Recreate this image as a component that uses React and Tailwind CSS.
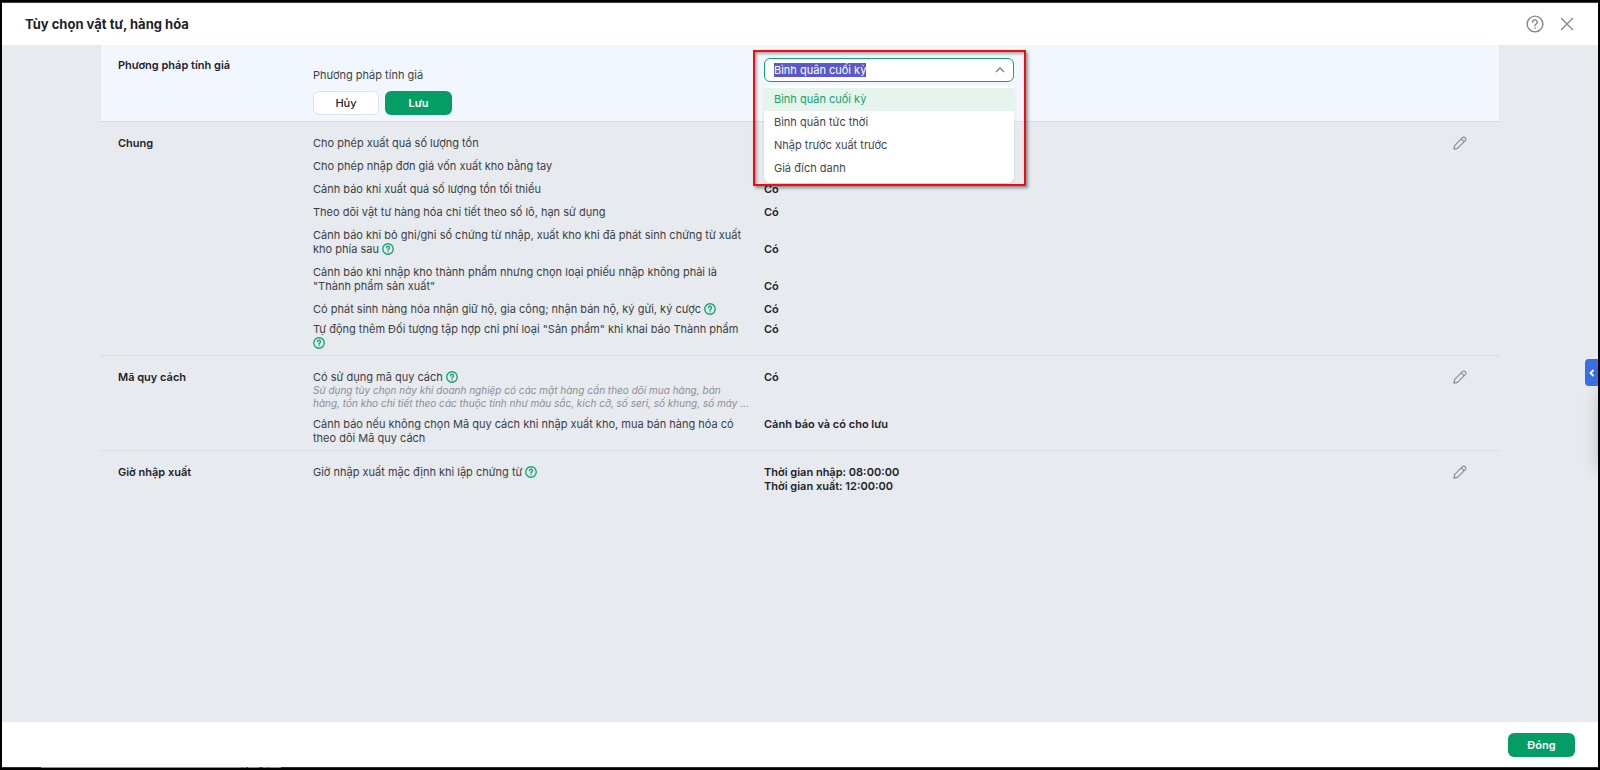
import { useEffect, useRef, useState } from "react";
import clsx from "clsx";

const PRICING_METHODS = [
  "Bình quân cuối kỳ",
  "Bình quân tức thời",
  "Nhập trước xuất trước",
  "Giá đích danh",
];

const GENERAL_OPTIONS = [
  { label: "Cho phép xuất quá số lượng tồn" },
  { label: "Cho phép nhập đơn giá vốn xuất kho bằng tay" },
  { label: "Cảnh báo khi xuất quá số lượng tồn tối thiểu", value: "Có" },
  { label: "Theo dõi vật tư hàng hóa chi tiết theo số lô, hạn sử dụng", value: "Có" },
  {
    label: "Cảnh báo khi bỏ ghi/ghi sổ chứng từ nhập, xuất kho khi đã phát sinh chứng từ xuất kho phía sau",
    value: "Có",
    help: true,
    alignEnd: true,
  },
  {
    label: 'Cảnh báo khi nhập kho thành phẩm nhưng chọn loại phiếu nhập không phải là "Thành phẩm sản xuất"',
    value: "Có",
    alignEnd: true,
  },
  {
    label: "Có phát sinh hàng hóa nhận giữ hộ, gia công; nhận bán hộ, ký gửi, ký cược",
    value: "Có",
    help: true,
  },
  {
    label: 'Tự động thêm Đối tượng tập hợp chi phí loại "Sản phẩm" khi khai báo Thành phẩm',
    value: "Có",
    help: true,
    tight: true,
  },
];

function HelpIcon({ className, strokeWidth = 1.5 }) {
  return (
    <svg viewBox="0 0 16 16" fill="none" stroke="currentColor" strokeWidth={strokeWidth} strokeLinecap="round" className={className}>
      <circle cx="8" cy="8" r="7" />
      <path d="M6 6.4a2 2 0 1 1 3.2 1.5C8.4 8.4 8 8.7 8 9.5" />
      <path d="M8 11.6v.1" />
    </svg>
  );
}

function HelpButton() {
  return (
    <button type="button" aria-label="Trợ giúp" className="inline-block size-3 align-[-2px] text-[#12a36c]">
      <HelpIcon className="block size-3" strokeWidth={1.8} />
    </button>
  );
}

function EditButton() {
  return (
    <button type="button" aria-label="Sửa" className="flex h-3.5 items-center self-start pl-0.5 text-[#8b8e93]">
      <svg viewBox="0 0 14 14" fill="none" stroke="currentColor" strokeWidth="1.2" strokeLinejoin="round" className="size-3.5">
        <path d="M.9 13.1l.7-3.5L9.4 1.7a1.9 1.9 0 0 1 2.8 0l.1.1a1.9 1.9 0 0 1 0 2.8L4.4 12.4z" />
        <path d="M8.3 2.9l2.9 2.9" />
      </svg>
    </button>
  );
}

function Section({ title, children }) {
  return (
    <section className="grid grid-cols-[195fr_1138fr_32px] border-b border-[#d9dce1] pt-3.5 pr-4 pb-[5px] pl-[17px] last:border-b-0">
      <h2 className="font-semibold text-[#1f2229]">{title}</h2>
      <div>{children}</div>
      <EditButton />
    </section>
  );
}

function OptionRow({ label, value, help, note, alignEnd, tight }) {
  return (
    <div className={clsx("grid grid-cols-[451fr_687fr] first:mt-0", tight ? "mt-1.5" : "mt-[9px]")}>
      <div className="min-w-0 pr-5">
        <p>
          {label}
          {help && " "}
          {help && <HelpButton />}
        </p>
        {note && <p className="pb-px text-[10px] leading-[13px] whitespace-pre text-[#8c8f94] italic">{note}</p>}
      </div>
      {value && (
        <p className={clsx("font-semibold whitespace-pre-line text-[#1f2229]", alignEnd && "self-end")}>{value}</p>
      )}
    </div>
  );
}

function MethodSelect() {
  const inputRef = useRef(null);
  const [value, setValue] = useState(PRICING_METHODS[0]);

  useEffect(() => {
    inputRef.current.focus();
    inputRef.current.select();
  }, []);

  return (
    <div className="relative w-[250px] self-start">
      <div className="flex h-6 items-center rounded-md border border-[#12a36c] bg-white pr-2 pl-[9px]">
        <input
          id="pricing-method"
          ref={inputRef}
          type="text"
          role="combobox"
          aria-expanded="true"
          aria-controls="pricing-method-list"
          value={value}
          onChange={(e) => setValue(e.target.value)}
          className="h-3.5 min-w-0 flex-1 bg-transparent outline-none selection:bg-[#5a58cb] selection:text-white"
        />
        <button type="button" aria-label="Đóng danh sách" className="text-[#7b7e84]">
          <svg viewBox="0 0 10 10" fill="none" stroke="currentColor" strokeWidth="1.3" className="size-2.5">
            <path d="M1 7l4-4 4 4" />
          </svg>
        </button>
      </div>

      {/* Danh sách phương pháp */}
      <ul
        id="pricing-method-list"
        role="listbox"
        className="absolute top-full left-0 z-10 mt-[3px] w-full rounded-md bg-white py-[3px] shadow-sm"
      >
        {PRICING_METHODS.map((method) => (
          <li
            key={method}
            role="option"
            aria-selected={method === value}
            onClick={() => setValue(method)}
            className={clsx(
              "px-2.5 leading-[23px]",
              method === value ? "bg-[#e5f5ee] text-[#12a36c]" : "text-[#43464d]",
            )}
          >
            {method}
          </li>
        ))}
      </ul>

      {/* Khung nhấn mạnh */}
      <div className="pointer-events-none absolute -top-2 -left-[11px] z-20 h-[136px] w-[273px] border-2 border-[#f40b0b] shadow-[2px_2px_3px_rgba(0,0,0,0.4),inset_2px_2px_3px_rgba(0,0,0,0.3)]" />
    </div>
  );
}

export default function App() {
  return (
    <div className="relative flex h-screen flex-col overflow-hidden border-x-2 border-t-2 border-b-2 border-black bg-[#e7eaef] font-['Inter',sans-serif] text-[11px] leading-3.5 text-[#3b3e45]">
      {/* Tiêu đề */}
      <header className="flex h-[43px] shrink-0 items-center border-t border-[#3b3d42] bg-white pr-6 pl-[23px]">
        <h1 className="flex-1 text-[13px] font-bold text-[#1f2229]">Tùy chọn vật tư, hàng hóa</h1>
        <button type="button" aria-label="Trợ giúp" className="mr-4 text-[#85888e]">
          <HelpIcon className="size-[18px]" strokeWidth={1.3} />
        </button>
        <button type="button" aria-label="Đóng cửa sổ" className="text-[#85888e]">
          <svg viewBox="0 0 14 14" fill="none" stroke="currentColor" strokeWidth="1.4" strokeLinecap="round" className="size-3.5">
            <path d="M1.5 1.5l11 11M12.5 1.5l-11 11" />
          </svg>
        </button>
      </header>

      <main className="mx-[99px] flex-1">
        {/* Phương pháp tính giá */}
        <form
          onSubmit={(e) => e.preventDefault()}
          className="grid h-[77px] grid-cols-[195fr_451fr_719fr] border-b border-[#d9dce1] bg-[#f2f7ff] pt-[13px] pr-4 pl-[17px]"
        >
          <h2 className="font-semibold text-[#1f2229]">Phương pháp tính giá</h2>
          <div className="pt-2.5">
            <label htmlFor="pricing-method" className="block">
              Phương pháp tính giá
            </label>
            <div className="mt-[9px] flex gap-1.5">
              <button type="button" className="h-6 w-[66px] rounded-md border border-[#dfe1e5] bg-white font-medium text-[#1f2229]">
                Hủy
              </button>
              <button type="submit" className="h-6 w-[67px] rounded-md bg-[#049d65] font-semibold text-white">
                Lưu
              </button>
            </div>
          </div>
          <MethodSelect />
        </form>

        <Section title="Chung">
          {GENERAL_OPTIONS.map((option) => (
            <OptionRow key={option.label} {...option} />
          ))}
        </Section>

        <Section title="Mã quy cách">
          <OptionRow
            label="Có sử dụng mã quy cách"
            value="Có"
            help
            note={
              "Sử dụng tùy chọn này khi doanh nghiệp có các mặt hàng cần theo dõi mua hàng, bán\n" +
              "hàng, tồn kho chi tiết theo các thuộc tính như màu sắc, kích cỡ, số seri, số khung, số máy ..."
            }
          />
          <OptionRow
            label="Cảnh báo nếu không chọn Mã quy cách khi nhập xuất kho, mua bán hàng hóa có theo dõi Mã quy cách"
            value="Cảnh báo và có cho lưu"
            tight
          />
        </Section>

        <Section title="Giờ nhập xuất">
          <OptionRow
            label="Giờ nhập xuất mặc định khi lập chứng từ"
            value={"Thời gian nhập: 08:00:00\nThời gian xuất: 12:00:00"}
            help
          />
        </Section>
      </main>

      <footer className="flex h-[45px] shrink-0 items-center justify-end bg-white pr-[23px]">
        <button type="button" className="h-6 w-[67px] rounded-md bg-[#049d65] font-semibold text-white">
          Đóng
        </button>
      </footer>
      <div className="flex h-px shrink-0 bg-[#2a2e38]">
        <div className="ml-[39px] flex w-60 bg-[#8f8f8f] pl-[200px]">
          <span className="w-0.5 bg-red-500" />
          <span className="ml-[3px] w-0.5 bg-blue-700" />
          <span className="ml-[11px] w-1 bg-blue-700" />
          <span className="ml-1 w-[3px] bg-red-500" />
        </div>
      </div>

      {/* Nút mở bảng trợ giúp bên phải */}
      <div className="absolute top-[388px] -right-5 h-20 w-5 shadow-[0_0_16px_rgba(0,0,0,0.18)]" />
      <button
        type="button"
        aria-label="Mở bảng bên phải"
        className="absolute top-[357px] right-0 flex h-[27px] w-[13px] items-center justify-center rounded-l-sm bg-[#3b6de3] text-white"
      >
        <svg viewBox="0 0 8 8" fill="none" stroke="currentColor" strokeWidth="1.8" className="size-2">
          <path d="M5.5 1L2.5 4l3 3" />
        </svg>
      </button>
    </div>
  );
}
